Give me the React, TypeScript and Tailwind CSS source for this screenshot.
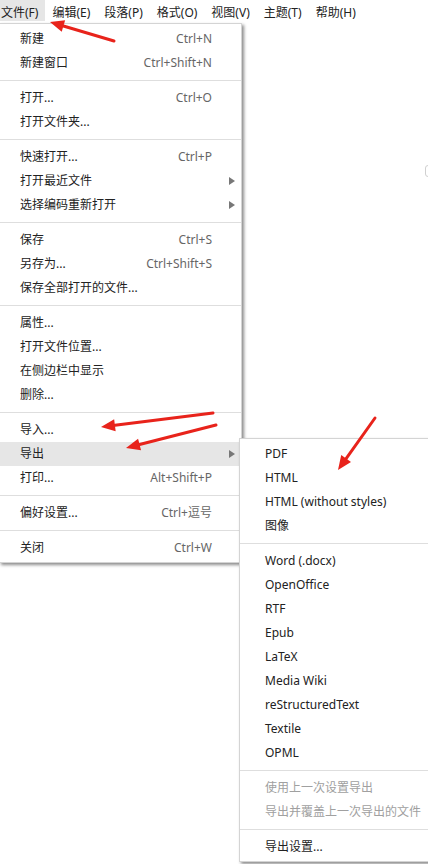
import React from 'react';

type Entry =
  | { label: string; shortcut?: string; sub?: boolean; active?: boolean; disabled?: boolean }
  | 'sep';

const menuBar = ['文件(F)', '编辑(E)', '段落(P)', '格式(O)', '视图(V)', '主题(T)', '帮助(H)'];

const fileMenu: Entry[] = [
  { label: '新建', shortcut: 'Ctrl+N' },
  { label: '新建窗口', shortcut: 'Ctrl+Shift+N' },
  'sep',
  { label: '打开...', shortcut: 'Ctrl+O' },
  { label: '打开文件夹...' },
  'sep',
  { label: '快速打开...', shortcut: 'Ctrl+P' },
  { label: '打开最近文件', sub: true },
  { label: '选择编码重新打开', sub: true },
  'sep',
  { label: '保存', shortcut: 'Ctrl+S' },
  { label: '另存为...', shortcut: 'Ctrl+Shift+S' },
  { label: '保存全部打开的文件...' },
  'sep',
  { label: '属性...' },
  { label: '打开文件位置...' },
  { label: '在侧边栏中显示' },
  { label: '删除...' },
  'sep',
  { label: '导入...' },
  { label: '导出', sub: true, active: true },
  { label: '打印...', shortcut: 'Alt+Shift+P' },
  'sep',
  { label: '偏好设置...', shortcut: 'Ctrl+逗号' },
  'sep',
  { label: '关闭', shortcut: 'Ctrl+W' },
];

const exportMenu: Entry[] = [
  { label: 'PDF' },
  { label: 'HTML' },
  { label: 'HTML (without styles)' },
  { label: '图像' },
  'sep',
  { label: 'Word (.docx)' },
  { label: 'OpenOffice' },
  { label: 'RTF' },
  { label: 'Epub' },
  { label: 'LaTeX' },
  { label: 'Media Wiki' },
  { label: 'reStructuredText' },
  { label: 'Textile' },
  { label: 'OPML' },
  'sep',
  { label: '使用上一次设置导出', shortcut: 'Ctrl+Shift+E', disabled: true },
  { label: '导出并覆盖上一次导出的文件', disabled: true },
  'sep',
  { label: '导出设置...' },
];

const SubArrow = () => (
  <svg width="6" height="8" viewBox="0 0 6 8" className="shrink-0">
    <polygon points="0,0 6,4 0,8" fill="#777" />
  </svg>
);

// red annotation arrow, tail -> tip
const Arrow = ({ x1, y1, x2, y2 }: { x1: number; y1: number; x2: number; y2: number }) => {
  const len = Math.hypot(x2 - x1, y2 - y1);
  const dx = (x2 - x1) / len;
  const dy = (y2 - y1) / len;
  const bx = x2 - dx * 14;
  const by = y2 - dy * 14;
  const nx = -dy * 6;
  const ny = dx * 6;
  return (
    <g>
      <line x1={x1} y1={y1} x2={bx} y2={by} stroke="#e8231b" strokeWidth="3" strokeLinecap="round" />
      <polygon points={`${x2},${y2} ${bx + nx},${by + ny} ${bx - nx},${by - ny}`} fill="#e8231b" />
    </g>
  );
};

const App = () => {
  return (
    <div className="relative w-[428px] h-[864px] overflow-hidden bg-white text-[12px] text-[#222] font-['Noto_Sans','Noto_Sans_CJK_SC',sans-serif]">
      {/* Menu bar */}
      <div className="flex h-[23px] -ml-[6px]">
        {menuBar.map((m, i) => (
          <div
            key={m}
            className={`h-[21px] px-[7px] leading-[26px] whitespace-nowrap ${i === 0 ? 'bg-[#e6e6e6]' : ''}`}
          >
            {m}
          </div>
        ))}
      </div>

      {/* faint edge of page content */}
      <div className="absolute left-[425px] top-[165px] w-[10px] h-[12px] rounded-[3px] border border-[#d0d0d0]" />

      {/* File menu */}
      <div className="absolute left-[-1px] top-[23px] w-[243px] bg-white border border-[#d4d4d4] pt-[3px] pb-[2px] shadow-[2px_2px_3px_rgba(0,0,0,0.45)]">
        {fileMenu.map((e, i) =>
          e === 'sep' ? (
            <div key={i} className="my-[5px] h-px bg-[#dedede]" />
          ) : (
            <div
              key={i}
              className={`flex items-center h-6 pl-[20px] pr-[6px] whitespace-nowrap ${e.active ? 'bg-[#e6e6e6]' : ''}`}
            >
              <span className="flex-1">{e.label}</span>
              {e.shortcut && <span className="mr-[17px] text-[#666]">{e.shortcut}</span>}
              {e.sub ? <SubArrow /> : <span className="w-[6px]" />}
            </div>
          )
        )}
      </div>

      {/* Export submenu */}
      <div className="absolute left-[239px] top-[438px] w-[280px] bg-white border border-[#d4d4d4] pt-[3px] pb-[2px] shadow-[2px_2px_3px_rgba(0,0,0,0.45)]">
        {exportMenu.map((e, i) =>
          e === 'sep' ? (
            <div key={i} className="my-[5px] h-px bg-[#dedede]" />
          ) : (
            <div
              key={i}
              className={`flex items-center h-6 pl-[25px] whitespace-nowrap ${e.disabled ? 'text-[#a0a0a0]' : ''}`}
            >
              <span className={e.shortcut ? 'w-[163px] shrink-0' : ''}>{e.label}</span>
              {e.shortcut && <span className="text-[#b0b0b0]">{e.shortcut}</span>}
            </div>
          )
        )}
      </div>

      {/* annotations */}
      <svg className="absolute inset-0 pointer-events-none" width="428" height="864">
        <Arrow x1={114} y1={41} x2={50} y2={22} />
        <Arrow x1={213} y1={413} x2={101} y2={427} />
        <Arrow x1={216} y1={425} x2={126} y2={448} />
        <Arrow x1={375} y1={418} x2={338} y2={470} />
      </svg>
    </div>
  );
};

export default App;
